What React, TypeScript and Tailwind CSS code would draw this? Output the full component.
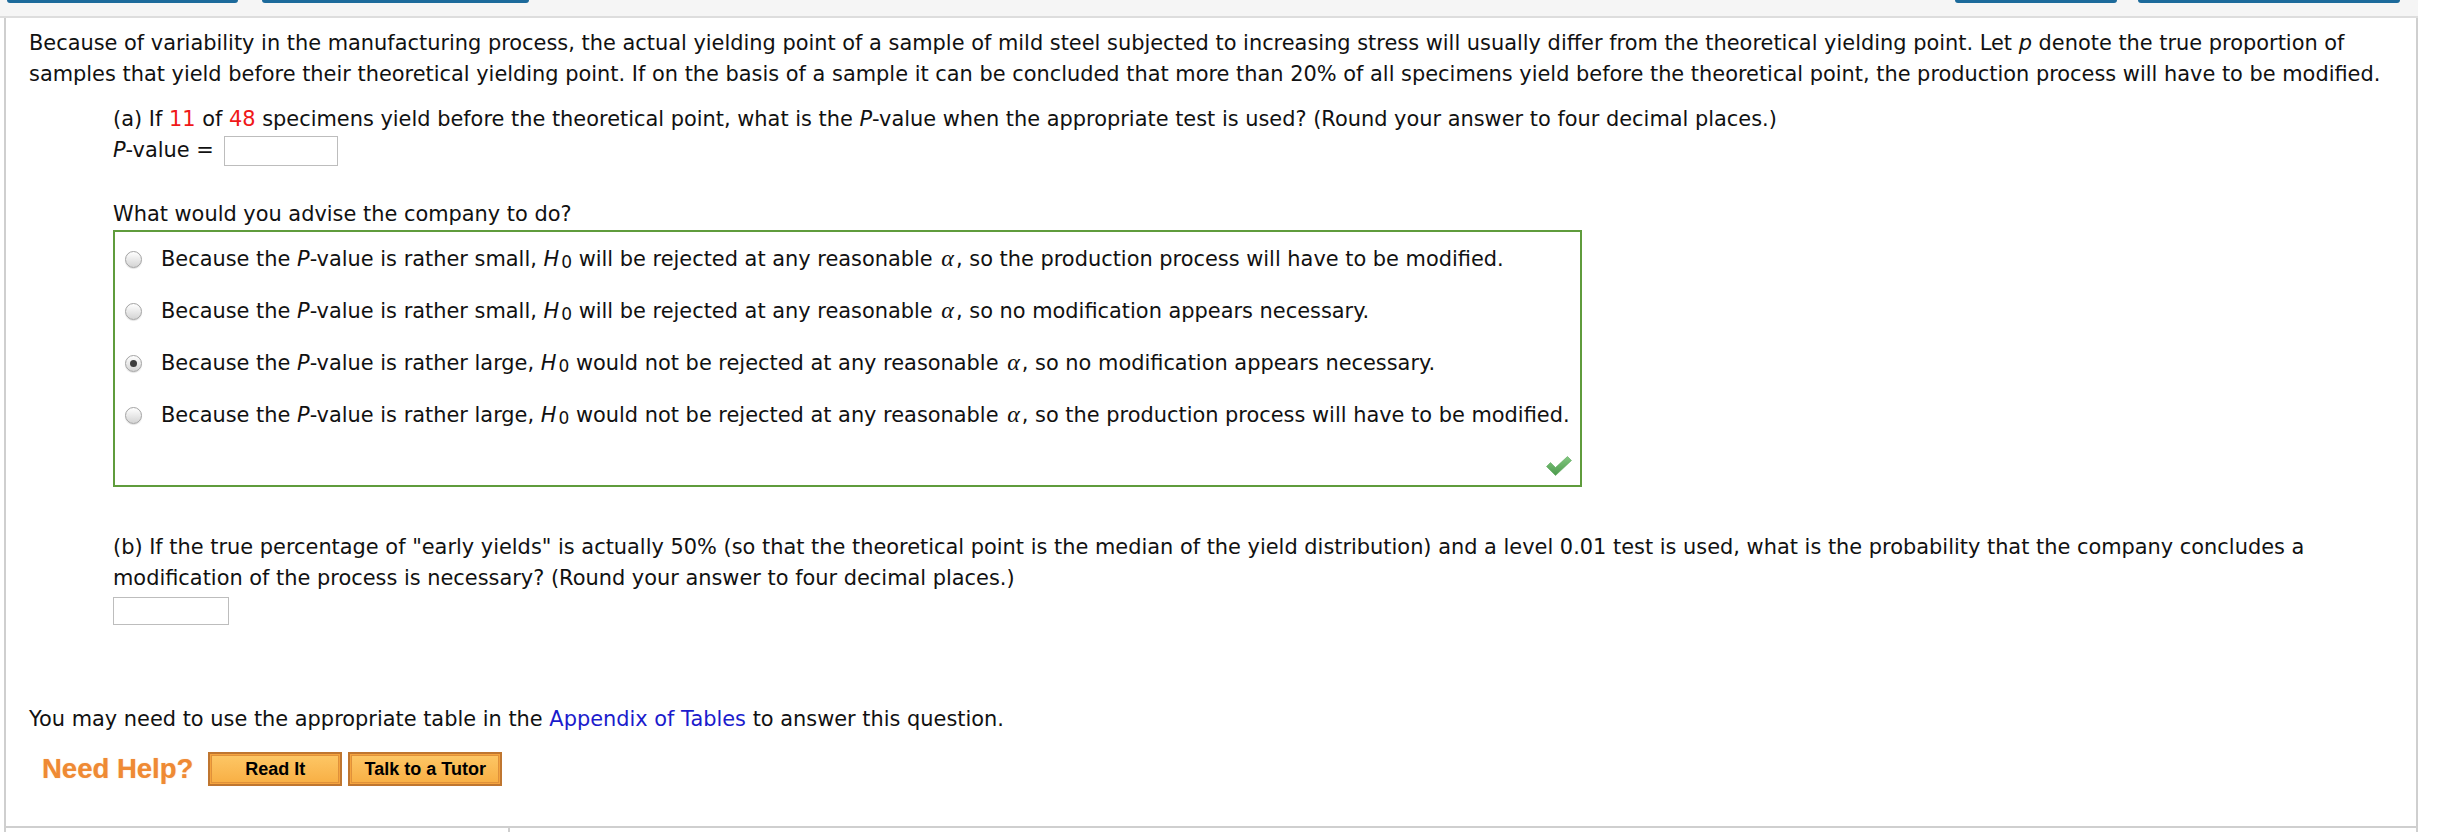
import React from "react";

const I = ({ children }: { children: React.ReactNode }) => <i className="italic">{children}</i>;
const Alpha = () => <i className="italic font-['Liberation_Serif',serif] text-[24px] mx-[2px]">α</i>;
const H0 = () => (
  <>
    <i className="italic">H</i>
    <sub className="text-[17px] relative top-[2px] ml-[2px]">0</sub>
  </>
);

const Radio = ({ checked }: { checked?: boolean }) => (
  <span className="w-[17px] h-[17px] shrink-0 rounded-full border border-[#a3a3a3] bg-linear-to-b from-white to-[#d4d4d4] flex items-center justify-center shadow-[0_1px_1px_rgba(0,0,0,0.12)]">
    {checked && <span className="w-[7px] h-[7px] rounded-full bg-[#3c3c3c]" />}
  </span>
);

const Option = ({ checked, children }: { checked?: boolean; children: React.ReactNode }) => (
  <div className="h-[52px] flex items-center pl-[10px]">
    <Radio checked={checked} />
    <span className="ml-[19px]">{children}</span>
  </div>
);

const Btn = ({ w, children }: { w: string; children: React.ReactNode }) => (
  <span className={`${w} h-[34px] border-2 border-[#bf7630] bg-[#f5a43e] p-px flex`}>
    <span className="flex-1 flex items-center justify-center border border-[#e0913a] bg-linear-to-b from-[#fdc664] to-[#f8b045] font-['Liberation_Sans',sans-serif] font-bold text-[18px] text-black">
      {children}
    </span>
  </span>
);

export default function App() {
  return (
    <div className="w-[2438px] h-[832px] bg-white overflow-hidden font-['DejaVu_Sans',sans-serif] text-[20.9px] leading-[31px] text-[#111]">
      {/* top band with tabs */}
      <div className="w-[2418px] h-[18px] bg-[#f5f5f5] border-b-2 border-[#dddddd] flex items-start">
        <span className="ml-[7px] w-[231px] h-[3px] rounded-b-[4px] bg-[#1c6a9b]" />
        <span className="ml-[24px] w-[267px] h-[3px] rounded-b-[4px] bg-[#1c6a9b]" />
        <span className="flex-1" />
        <span className="w-[162px] h-[3px] rounded-b-[4px] bg-[#1c6a9b]" />
        <span className="ml-[21px] w-[262px] h-[3px] rounded-b-[4px] bg-[#1c6a9b]" />
        <span className="w-[18px]" />
      </div>

      {/* main panel */}
      <div className="ml-[4px] w-[2414px] h-[808px] border-l-2 border-r-2 border-[#cfcfcf] pl-[23px] pr-[23px] pt-[10px]">
        <p>
          Because of variability in the manufacturing process, the actual yielding point of a sample of mild steel
          subjected to increasing stress will usually differ from the theoretical yielding point. Let <I>p</I> denote
          the true proportion of samples that yield before their theoretical yielding point. If on the basis of a sample
          it can be concluded that more than 20% of all specimens yield before the theoretical point, the production
          process will have to be modified.
        </p>

        <div className="ml-[84px] mt-[14px]">
          <p>
            (a) If <span className="text-[#f01818]">11</span> of <span className="text-[#f01818]">48</span> specimens
            yield before the theoretical point, what is the <I>P</I>-value when the appropriate test is used? (Round
            your answer to four decimal places.)
          </p>
          <p className="flex items-center">
            <span>
              <I>P</I>-value =
            </span>
            <span className="ml-[10px] w-[114px] h-[30px] border border-[#bdbdbd] bg-white" />
          </p>

          <p className="mt-[33px]">What would you advise the company to do?</p>

          <div className="w-[1469px] border-2 border-[#5f9c3c] pt-px">
            <Option>
              Because the <I>P</I>-value is rather small, <H0 /> will be rejected at any reasonable <Alpha />, so the
              production process will have to be modified.
            </Option>
            <Option>
              Because the <I>P</I>-value is rather small, <H0 /> will be rejected at any reasonable <Alpha />, so no
              modification appears necessary.
            </Option>
            <Option checked>
              Because the <I>P</I>-value is rather large, <H0 /> would not be rejected at any reasonable <Alpha />, so
              no modification appears necessary.
            </Option>
            <Option>
              Because the <I>P</I>-value is rather large, <H0 /> would not be rejected at any reasonable <Alpha />, so
              the production process will have to be modified.
            </Option>
            <div className="h-[44px] flex items-start justify-end pr-[8px] pt-[15px]">
              <svg width="26" height="20" viewBox="0 0 26 20">
                <defs>
                  <linearGradient id="ck" x1="0" y1="0" x2="0" y2="1">
                    <stop offset="0" stopColor="#82c780" />
                    <stop offset="1" stopColor="#4c9a4c" />
                  </linearGradient>
                </defs>
                <path d="M0.5 10.5 L4.5 6.5 L9.5 11.5 L21.5 0.5 L25.5 4.5 L9.5 19.5 Z" fill="url(#ck)" stroke="#5aa85a" strokeWidth="0.6" />
              </svg>
            </div>
          </div>

          <p className="mt-[45px]">
            (b) If the true percentage of "early yields" is actually 50% (so that the theoretical point is the median of
            the yield distribution) and a level 0.01 test is used, what is the probability that the company concludes a
            modification of the process is necessary? (Round your answer to four decimal places.)
          </p>
          <div className="mt-[3px] w-[116px] h-[28px] border border-[#bdbdbd]" />
        </div>

        <p className="mt-[79px]">
          You may need to use the appropriate table in the <span className="text-[#1b1bcc]">Appendix of Tables</span> to
          answer this question.
        </p>

        <div className="mt-[17px] flex items-center">
          <span className="ml-[13px] font-['Liberation_Sans',sans-serif] font-bold text-[27.5px] leading-[34px] text-[#ef8a34] [text-shadow:0_0_1px_rgba(239,138,52,0.6)]">
            Need Help?
          </span>
          <span className="ml-[15px]">
            <Btn w="w-[134px]">Read It</Btn>
          </span>
          <span className="ml-[6px]">
            <Btn w="w-[154px]">Talk to a Tutor</Btn>
          </span>
        </div>
      </div>

      {/* bottom row */}
      <div className="ml-[4px] w-[2414px] h-[6px] border-t-2 border-l-2 border-r-2 border-[#cfcfcf] flex">
        <div className="w-[504px] border-r-2 border-[#cfcfcf]" />
      </div>
    </div>
  );
}
